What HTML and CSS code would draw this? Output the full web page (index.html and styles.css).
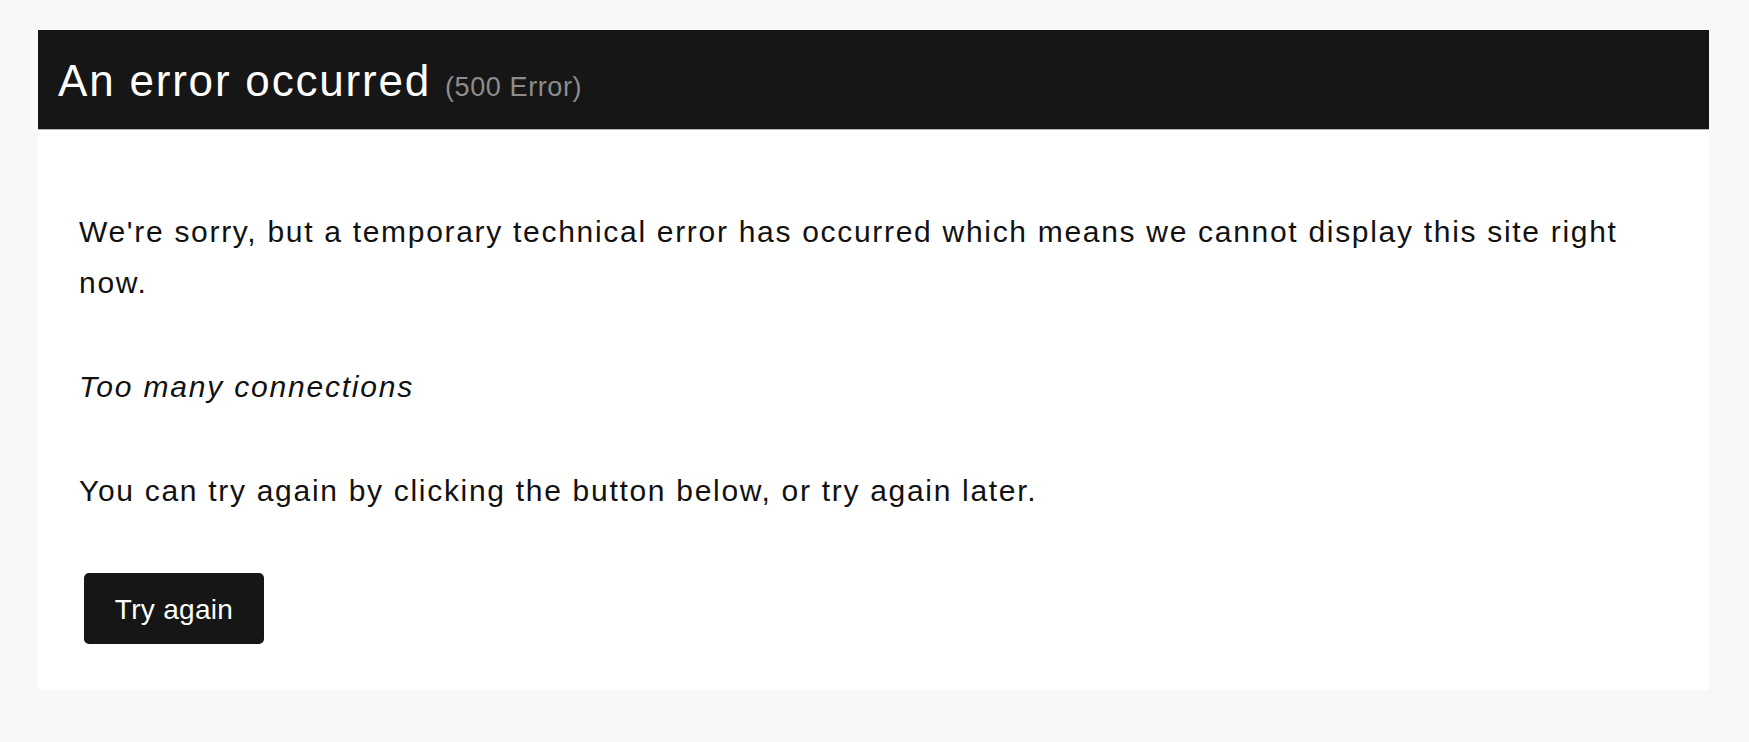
FILE: index.html
```html
<!DOCTYPE html>
<html lang="en">
<head>
<meta charset="utf-8">
<title>An error occurred</title>
<link rel="stylesheet" href="styles.css">
</head>
<body>
<div class="page">
  <div class="card">
    <div class="card-head">
      <h1 class="title">An error occurred <small class="code">(500 Error)</small></h1>
    </div>
    <div class="card-body">
      <p class="text">We're sorry, but a temporary technical error has occurred which means we cannot display this site right now.</p>
      <p class="text"><em>Too many connections</em></p>
      <p class="text">You can try again by clicking the button below, or try again later.</p>
      <button class="btn" type="button">Try again</button>
    </div>
  </div>
</div>
</body>
</html>
```
FILE: styles.css
```css
html, body {
  margin: 0;
  padding: 0;
  background: #f8f8f8;
}
body {
  font-family: "Liberation Sans", Arial, Helvetica, sans-serif;
  color: #111;
}
.page {
  padding: 30px 40px 52px 38px;
}
.card {
  background: #fff;
}
.card-head {
  background: #161616;
  height: 70px;
  border-bottom: 1px solid #b5b5b5;
  padding: 29px 20px 0 20px;
}
.title {
  margin: 0;
  font-size: 44px;
  line-height: 1;
  font-weight: normal;
  color: #fff;
  letter-spacing: 1.8px;
}
.code {
  font-size: 27px;
  color: #8c8c8c;
  letter-spacing: 0.6px;
}
.card-body {
  padding: 76px 41px 46px 41px;
}
.text {
  margin: 0 0 53px 0;
  font-size: 30px;
  line-height: 51px;
  letter-spacing: 1.7px;
}
.text em {
  font-style: italic;
  letter-spacing: 1.8px;
}
.btn {
  display: block;
  margin: 57px 0 0 5px;
  width: 180px;
  height: 71px;
  padding: 2px 0 0 0;
  border: 0;
  border-radius: 5px;
  background: #161616;
  color: #fff;
  font-family: "Liberation Sans", Arial, Helvetica, sans-serif;
  font-size: 28px;
  line-height: 1;
  letter-spacing: 0.3px;
}
```
